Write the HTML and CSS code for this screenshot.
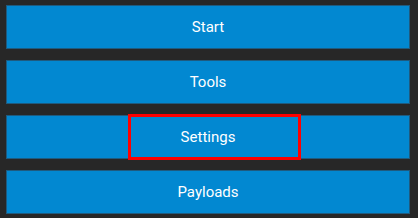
FILE: index.html
```html
<!DOCTYPE html>
<html>
<head>
    <title>Menu</title>
    <link rel="stylesheet" href="styles.css">
</head>
<body>
    <div class="menu">
        <button class="menu-item">Start</button>
        <button class="menu-item">Tools</button>
        <button class="menu-item selected">Settings<span class="focus-box"></span></button>
        <button class="menu-item">Payloads</button>
    </div>
</body>
</html>
```
FILE: styles.css
```css
html, body {
    margin: 0;
    background: #272727;
}
body {
    padding: 5px 8px 4px 6px;
    font-family: Roboto, "Liberation Sans", sans-serif;
}
.menu {
    display: flex;
    flex-direction: column;
    gap: 11px;
}
.menu-item {
    position: relative;
    height: 44px;
    width: 100%;
    margin: 0;
    padding: 0;
    border: 1px solid #1f5a7e;
    background: #0288d1;
    color: #ffffff;
    font-family: inherit;
    font-size: 15px;
    text-align: center;
}
.focus-box {
    position: absolute;
    left: 121px;
    top: -2px;
    width: 167px;
    height: 40px;
    border: 3px solid #ff0000;
}
```
